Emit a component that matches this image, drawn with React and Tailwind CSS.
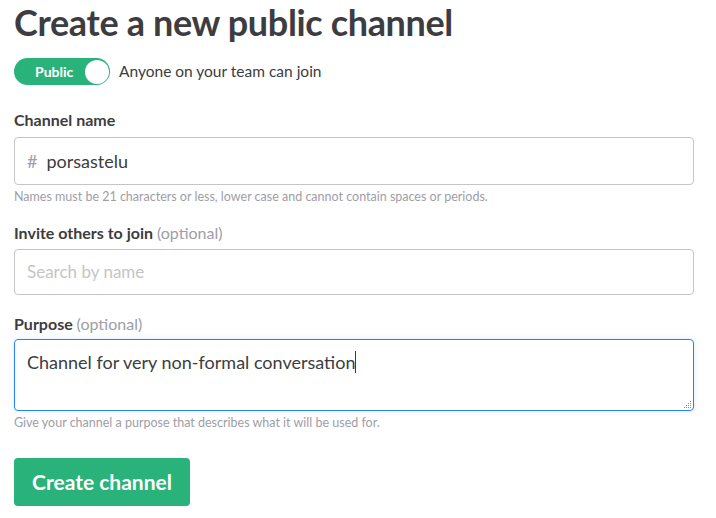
export default function App() {
  return (
    <div className="min-h-[518px] w-[716px] bg-white pl-[14px] pr-[22px] text-[#3d3c40]" style={{ fontFamily: 'Lato, "Noto Sans", sans-serif' }}>
      <h1 className="pt-[0px] text-[36px] font-bold leading-[44px] tracking-[-0.35px]">Create a new public channel</h1>
      <div className="mt-[14px] flex items-center">
        <div className="flex h-[27px] w-[96px] items-center rounded-full bg-[#2ab27b] pl-[21px] pr-[1px]">
          <span className="text-[14px] font-bold text-white">Public</span>
          <span className="ml-auto h-[24px] w-[24px] rounded-full bg-white"></span>
        </div>
        <span className="ml-[9px] text-[15.5px]">Anyone on your team can join</span>
      </div>

      <label className="mt-[25px] block text-[16px] font-bold leading-[20px]">Channel name</label>
      <div className="mt-[7px] flex h-[48px] items-center rounded-[4px] border border-[#c5c5c5] px-[12px] text-[18px]">
        <span className="text-[#9e9ea6]">#</span>
        <span className="ml-[9px]">porsastelu</span>
      </div>
      <p className="mt-[4px] text-[12.5px] leading-[16px] text-[#9e9ea6]">Names must be 21 characters or less, lower case and cannot contain spaces or periods.</p>

      <label className="mt-[18px] block text-[16px] font-bold leading-[20px]">
        Invite others to join <span className="font-normal text-[#9e9ea6]">(optional)</span>
      </label>
      <div className="mt-[6px] flex h-[46px] items-center rounded-[4px] border border-[#c5c5c5] px-[12px] text-[17px] text-[#c5c5c5]">
        Search by name
      </div>

      <label className="mt-[19px] block text-[16px] font-bold leading-[20px]">
        Purpose <span className="font-normal text-[#9e9ea6]">(optional)</span>
      </label>
      <div className="relative mt-[5px] h-[72px] rounded-[4px] border border-[#2780f8] px-[12px] pt-[7px] text-[18px] shadow-[0_0_6px_rgba(39,128,248,0.15)]">
        <span>Channel for very non-formal conversation</span>
        <span className="inline-block h-[22px] w-[1px] translate-y-[4px] bg-[#3d3c40]"></span>
        <svg className="absolute bottom-[1px] right-[1px]" width="9" height="9" viewBox="0 0 9 9">
          <g fill="#888">
            <rect x="7" y="1" width="1" height="1" />
            <rect x="5" y="3" width="1" height="1" />
            <rect x="7" y="3" width="1" height="1" />
            <rect x="3" y="5" width="1" height="1" />
            <rect x="5" y="5" width="1" height="1" />
            <rect x="7" y="5" width="1" height="1" />
            <rect x="1" y="7" width="1" height="1" />
            <rect x="3" y="7" width="1" height="1" />
            <rect x="5" y="7" width="1" height="1" />
            <rect x="7" y="7" width="1" height="1" />
          </g>
        </svg>
      </div>
      <p className="mt-[4px] text-[12.5px] leading-[16px] text-[#9e9ea6]">Give your channel a purpose that describes what it will be used for.</p>

      <button className="mt-[27px] h-[48px] w-[176px] rounded-[4px] bg-[#2ab27b] text-[21px] font-bold text-white">Create channel</button>
    </div>
  );
}
